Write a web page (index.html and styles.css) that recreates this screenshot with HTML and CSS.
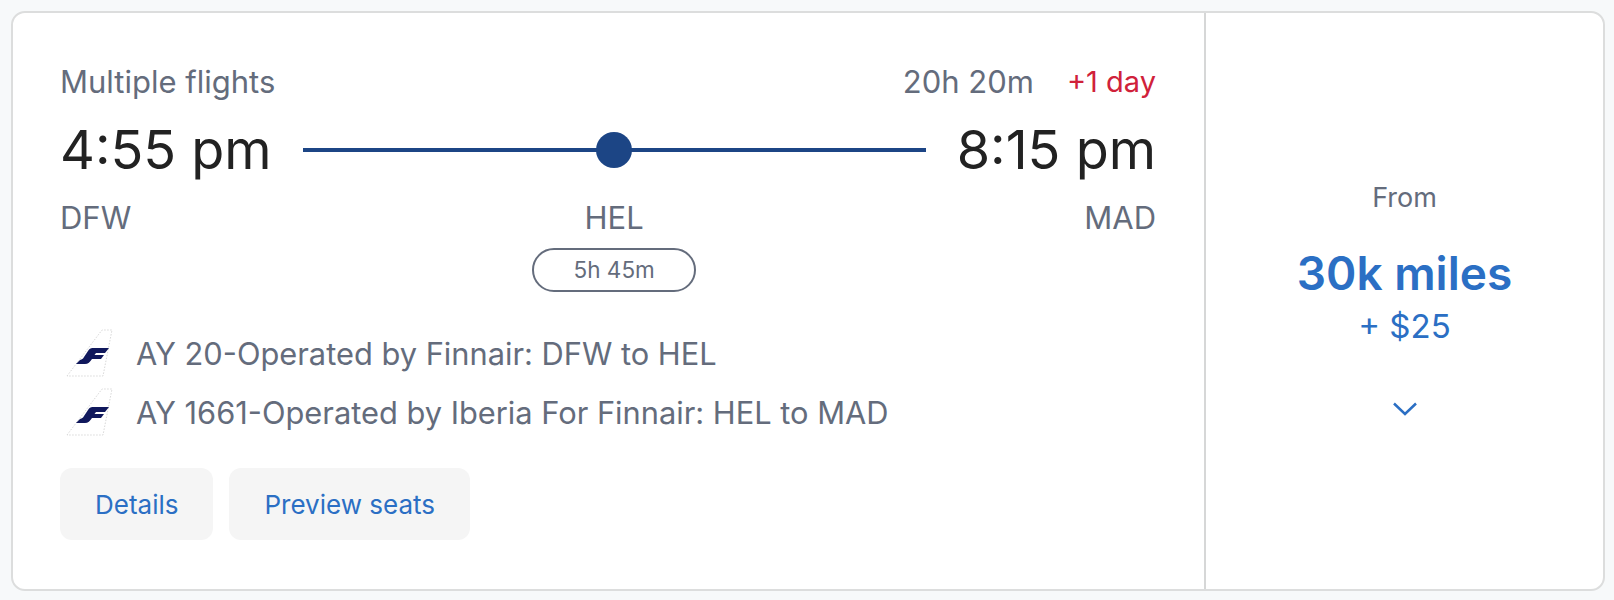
FILE: index.html
```html
<!DOCTYPE html>
<html lang="en">
<head>
<meta charset="utf-8">
<title>Flight option</title>
<link rel="stylesheet" href="styles.css">
</head>
<body>
<main class="card">
  <section class="info">
    <div class="top-row">
      <span>Multiple flights</span>
      <span class="duration">20h 20m<span class="plus">+1 day</span></span>
    </div>
    <div class="route">
      <span class="time">4:55 pm</span>
      <div class="line"><span class="dot"></span></div>
      <span class="time">8:15 pm</span>
      <span class="airport">DFW</span>
      <div class="stop">
        <span>HEL</span>
        <span class="pill">5h 45m</span>
      </div>
      <span class="airport end">MAD</span>
    </div>
    <ul class="legs">
      <li class="leg">
        <svg class="tail" viewBox="0 0 56 52"><path class="tail-edge" d="M5 49 40 3H50L41 49Z"/><path class="tail-f" d="M14 37 18 33C20 32 21 32 22 30L26 24C28 21 29 21 32 21H47L43 26H34L32.5 28H42L39 32H30C28 35 26 37 23 37Z"/></svg>
        <span>AY 20-Operated by Finnair: DFW to HEL</span>
      </li>
      <li class="leg">
        <svg class="tail" viewBox="0 0 56 52"><path class="tail-edge" d="M5 49 40 3H50L41 49Z"/><path class="tail-f" d="M14 37 18 33C20 32 21 32 22 30L26 24C28 21 29 21 32 21H47L43 26H34L32.5 28H42L39 32H30C28 35 26 37 23 37Z"/></svg>
        <span>AY 1661-Operated by Iberia For Finnair: HEL to MAD</span>
      </li>
    </ul>
    <div class="actions">
      <button class="btn">Details</button>
      <button class="btn">Preview seats</button>
    </div>
  </section>
  <aside class="price">
    <span class="from">From</span>
    <span class="miles">30k miles</span>
    <span class="cash">+ $25</span>
    <svg class="chevron" viewBox="0 0 24 14"><path d="M1 1.5 12 12 23 1.5"/></svg>
  </aside>
</main>
</body>
</html>
```
FILE: styles.css
```css
* { box-sizing: border-box; }
html, body { margin: 0; height: 100%; }
body {
  background: #f7f9fa;
  padding: 11px 9px 9px 11px;
  font-family: "Inter", "Liberation Sans", sans-serif;
  color: #646c7c;
}
.card {
  display: flex;
  width: 1594px;
  height: 580px;
  background: #fff;
  border: 2px solid #dcdddd;
  border-radius: 14px;
}
.info {
  width: 1193px;
  padding: 51px 48px 0 47px;
  border-right: 2px solid #d6d7d7;
  flex: none;
  font-size: 31px;
}
.top-row { display: flex; justify-content: space-between; line-height: 36px; }
.duration { display: flex; }
.plus { color: #d0213a; margin-left: 33px; font-size: 29px; }
.route {
  display: grid;
  grid-template-columns: auto 1fr auto;
  grid-template-rows: 68px auto;
  align-items: center;
  column-gap: 31px;
  row-gap: 16px;
  margin-top: 16px;
  line-height: 36px;
}
.time { font-size: 54px; color: #222; }
.line { height: 4px; background: #1c4585; position: relative; }
.dot {
  position: absolute;
  left: 50%;
  top: 50%;
  width: 36px;
  height: 36px;
  margin: -18px 0 0 -18px;
  border-radius: 50%;
  background: #1c4585;
}
.airport { align-self: start; }
.airport.end { text-align: right; }
.stop { display: flex; flex-direction: column; align-items: center; gap: 12px; }
.pill {
  width: 164px;
  height: 44px;
  border: 2px solid #646c7c;
  border-radius: 22px;
  font-size: 22.5px;
  line-height: 40px;
  text-align: center;
}
.legs { list-style: none; margin: 35px 0 0; padding: 0; display: flex; flex-direction: column; gap: 7px; font-size: 30.8px; }
.leg { display: flex; align-items: center; gap: 18px; height: 52px; padding-left: 2px; }
.tail { width: 56px; height: 52px; flex: none; }
.tail-edge { fill: #fff; stroke: #d8d8d8; stroke-width: 1; stroke-dasharray: 1.5 1.5; }
.tail-f { fill: #10185c; }
.actions { display: flex; gap: 16px; margin-top: 30px; }
.btn {
  height: 72px;
  padding: 0 35px;
  border: 0;
  border-radius: 12px;
  background: #f5f5f5;
  color: #2b6fc4;
  font: 26px "Inter", "Liberation Sans", sans-serif;
}
.price {
  flex: 1;
  display: flex;
  flex-direction: column;
  align-items: center;
  padding-top: 169px;
}
.from { font-size: 27px; line-height: 32px; }
.miles { color: #2b6fc4; font-size: 46px; font-weight: 600; line-height: 56px; margin-top: 31px; }
.cash { color: #2b6fc4; font-size: 33px; line-height: 40px; margin-top: 5px; }
.chevron { width: 24px; height: 14px; margin-top: 56px; fill: none; stroke: #2b6fc4; stroke-width: 2.5; }
```
